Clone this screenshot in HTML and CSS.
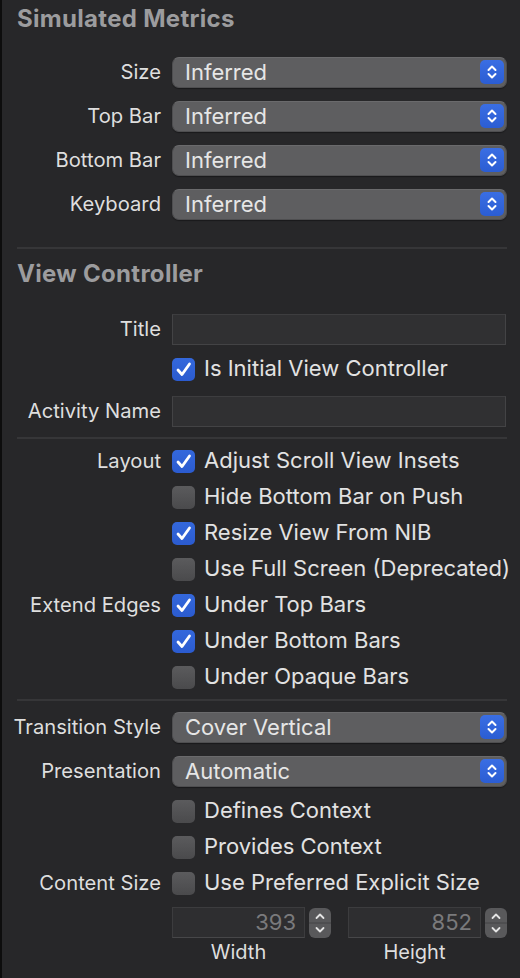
FILE: index.html
```html
<!DOCTYPE html>
<html>
<head>
<meta charset="utf-8">
<link rel="stylesheet" href="styles.css">
</head>
<body>
<div class="panel">
  <div class="header h1">Simulated Metrics</div>
  <div class="grid">
    <div class="row r44"><div class="label">Size</div><div class="popup"><span>Inferred</span><span class="arrows"><svg viewBox="0 0 24 24"><path d="M8.5 10 L12 6.5 L15.5 10 M8.5 14 L12 17.5 L15.5 14"/></svg></span></div></div>
    <div class="row r44"><div class="label">Top Bar</div><div class="popup"><span>Inferred</span><span class="arrows"><svg viewBox="0 0 24 24"><path d="M8.5 10 L12 6.5 L15.5 10 M8.5 14 L12 17.5 L15.5 14"/></svg></span></div></div>
    <div class="row r44"><div class="label">Bottom Bar</div><div class="popup"><span>Inferred</span><span class="arrows"><svg viewBox="0 0 24 24"><path d="M8.5 10 L12 6.5 L15.5 10 M8.5 14 L12 17.5 L15.5 14"/></svg></span></div></div>
    <div class="row r44"><div class="label">Keyboard</div><div class="popup"><span>Inferred</span><span class="arrows"><svg viewBox="0 0 24 24"><path d="M8.5 10 L12 6.5 L15.5 10 M8.5 14 L12 17.5 L15.5 14"/></svg></span></div></div>
  </div>
  <div class="sep sep1"></div>
  <div class="header h2">View Controller</div>
  <div class="grid">
    <div class="row r44 title-row"><div class="label">Title</div><div class="field"></div></div>
    <div class="row r36"><div class="label"></div><div class="check"><span class="box on"><svg viewBox="0 0 23 23"><path d="M6 12 L10 16.5 L17.5 6"/></svg></span><span class="ct">Is Initial View Controller</span></div></div>
    <div class="row r48"><div class="label">Activity Name</div><div class="field"></div></div>
  </div>
  <div class="sep sep2"></div>
  <div class="grid g3">
    <div class="row r36"><div class="label">Layout</div><div class="check"><span class="box on"><svg viewBox="0 0 23 23"><path d="M6 12 L10 16.5 L17.5 6"/></svg></span><span class="ct">Adjust Scroll View Insets</span></div></div>
    <div class="row r36"><div class="label"></div><div class="check"><span class="box"></span><span class="ct">Hide Bottom Bar on Push</span></div></div>
    <div class="row r36"><div class="label"></div><div class="check"><span class="box on"><svg viewBox="0 0 23 23"><path d="M6 12 L10 16.5 L17.5 6"/></svg></span><span class="ct">Resize View From NIB</span></div></div>
    <div class="row r36"><div class="label"></div><div class="check"><span class="box"></span><span class="ct">Use Full Screen (Deprecated)</span></div></div>
    <div class="row r36"><div class="label">Extend Edges</div><div class="check"><span class="box on"><svg viewBox="0 0 23 23"><path d="M6 12 L10 16.5 L17.5 6"/></svg></span><span class="ct">Under Top Bars</span></div></div>
    <div class="row r36"><div class="label"></div><div class="check"><span class="box on"><svg viewBox="0 0 23 23"><path d="M6 12 L10 16.5 L17.5 6"/></svg></span><span class="ct">Under Bottom Bars</span></div></div>
    <div class="row r36"><div class="label"></div><div class="check"><span class="box"></span><span class="ct">Under Opaque Bars</span></div></div>
  </div>
  <div class="sep sep3"></div>
  <div class="grid g4">
    <div class="row r44"><div class="label">Transition Style</div><div class="popup"><span>Cover Vertical</span><span class="arrows"><svg viewBox="0 0 24 24"><path d="M8.5 10 L12 6.5 L15.5 10 M8.5 14 L12 17.5 L15.5 14"/></svg></span></div></div>
    <div class="row r44"><div class="label">Presentation</div><div class="popup"><span>Automatic</span><span class="arrows"><svg viewBox="0 0 24 24"><path d="M8.5 10 L12 6.5 L15.5 10 M8.5 14 L12 17.5 L15.5 14"/></svg></span></div></div>
    <div class="row r36"><div class="label"></div><div class="check"><span class="box"></span><span class="ct">Defines Context</span></div></div>
    <div class="row r36"><div class="label"></div><div class="check"><span class="box"></span><span class="ct">Provides Context</span></div></div>
    <div class="row r36"><div class="label">Content Size</div><div class="check"><span class="box"></span><span class="ct">Use Preferred Explicit Size</span></div></div>
    <div class="row r43"><div class="label"></div>
      <div class="sizes">
        <div class="num-group"><div class="num">393</div><div class="stepper"><svg viewBox="0 0 22 30"><path class="chev" d="M7.5 10 L11 6.5 L14.5 10 M7.5 20 L11 23.5 L14.5 20"/><path class="div" d="M0 15 H22"/></svg></div></div>
        <div class="num-group"><div class="num">852</div><div class="stepper"><svg viewBox="0 0 22 30"><path class="chev" d="M7.5 10 L11 6.5 L14.5 10 M7.5 20 L11 23.5 L14.5 20"/><path class="div" d="M0 15 H22"/></svg></div></div>
      </div>
    </div>
    <div class="row r18"><div class="label"></div>
      <div class="sizes caps"><div class="cap">Width</div><div class="cap">Height</div></div>
    </div>
  </div>
</div>
</body>
</html>
```

FILE: styles.css
```css
html, body {
  margin: 0;
  padding: 0;
  background: #272729;
}
body {
  width: 520px;
  height: 978px;
  overflow: hidden;
  font-family: Inter, "Noto Sans", "Liberation Sans", sans-serif;
  font-size: 20.2px;
  color: #dedede;
}
.panel {
  box-sizing: border-box;
  height: 978px;
  border-left: 2px solid #0d0d0d;
  padding: 0 13px 0 3px;
}
.header {
  font-weight: 700;
  font-size: 24px;
  letter-spacing: 0.3px;
  color: #9c9c9e;
  height: 38px;
  line-height: 38px;
  padding-left: 12px;
}
.h1 { margin-bottom: 12px; }
.h2 { margin-top: 6px; margin-bottom: 14px; }
.grid {
  display: flex;
  flex-direction: column;
}
.row {
  display: grid;
  grid-template-columns: 156px 1fr;
  column-gap: 11px;
  align-items: center;
}
.r44 { height: 44px; }
.r36 { height: 36px; }
.r48 { height: 48px; }
.r43 { height: 43px; }
.r18 { height: 16px; align-items: start; }
.label {
  text-align: right;
  white-space: nowrap;
  padding-bottom: 2px;
}
.sep {
  height: 2px;
  background: #363638;
  margin-left: 12px;
}
.sep1 { margin-top: 21px; }
.sep2 { margin-top: 2px; }
.g3 { margin-top: 4px; }
.sep3 { margin-top: 4px; }
.g4 { margin-top: 4px; }

.popup {
  box-sizing: border-box;
  height: 31px;
  border-radius: 7px;
  background: #5e5e60;
  border: 1px solid #4e4e50;
  border-top-color: #6a6a6c;
  box-shadow: 0 1px 1px rgba(0,0,0,0.35);
  display: flex;
  align-items: center;
  justify-content: space-between;
  padding: 0 2px 0 12px;
  color: #e6e6e6;
  font-size: 22px;
}
.arrows {
  width: 24px;
  height: 24px;
  border-radius: 5px;
  background: linear-gradient(#3a6ee3, #2b5dd3);
  display: flex;
}
.arrows svg {
  width: 24px;
  height: 24px;
}
.arrows path {
  fill: none;
  stroke: #fff;
  stroke-width: 2;
  stroke-linecap: round;
  stroke-linejoin: round;
}
.field {
  box-sizing: border-box;
  height: 31px;
  background: #303032;
  border: 1px solid #434345;
  border-top-color: #3d3d3f;
  margin-right: 1px;
}
.check {
  display: flex;
  align-items: center;
  gap: 9px;
  white-space: nowrap;
  font-size: 22px;
  color: #e2e2e2;
}
.ct {
  padding-bottom: 2px;
}
.box {
  width: 23px;
  height: 23px;
  border-radius: 5px;
  box-sizing: border-box;
  background: linear-gradient(#5b5b5d, #4a4a4c);
  flex: none;
  display: flex;
}
.box.on {
  background: linear-gradient(#3468dc, #2b5bcf);
}
.box svg {
  width: 23px;
  height: 23px;
}
.box path {
  fill: none;
  stroke: #fff;
  stroke-width: 2.8;
  stroke-linecap: round;
  stroke-linejoin: round;
}
.sizes {
  display: grid;
  grid-template-columns: 1fr 1fr;
  column-gap: 17px;
}
.num-group {
  display: flex;
  gap: 4px;
  align-items: center;
}
.num {
  flex: 1;
  box-sizing: border-box;
  height: 31px;
  background: #2e2e30;
  border: 1px solid #3c3c3e;
  border-bottom-color: #474749;
  text-align: right;
  padding-right: 8px;
  line-height: 29px;
  color: #7a7a7c;
  font-size: 22px;
}
.stepper {
  width: 22px;
  height: 30px;
  border-radius: 6px;
  background: #59595b;
  display: flex;
}
.stepper svg {
  width: 22px;
  height: 30px;
}
.stepper .chev {
  fill: none;
  stroke: #e4e4e4;
  stroke-width: 1.8;
  stroke-linecap: round;
  stroke-linejoin: round;
}
.stepper .div {
  stroke: #444446;
  stroke-width: 1;
}
.caps {
  line-height: 16px;
  font-size: 20px;
}
.caps .cap {
  text-align: center;
  padding-right: 26px;
}
```
